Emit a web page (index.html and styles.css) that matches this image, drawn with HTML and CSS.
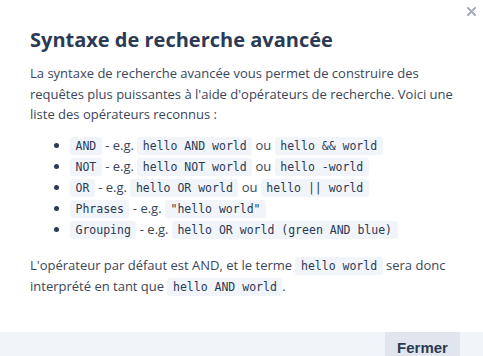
FILE: index.html
```html
<!DOCTYPE html>
<html lang="fr">
<head>
<meta charset="utf-8">
<link rel="stylesheet" href="styles.css">
</head>
<body>
<div class="modal">
  <button class="close" aria-label="Fermer">
    <svg width="9" height="9" viewBox="0 0 9 9"><path d="M1 1L8 8M8 1L1 8" stroke="#a3abb9" stroke-width="2" stroke-linecap="round"/></svg>
  </button>
  <div class="body">
    <h2 class="title">Syntaxe de recherche avancée</h2>
    <p class="text">La syntaxe de recherche avancée vous permet de construire des requêtes plus puissantes à l'aide d'opérateurs de recherche. Voici une liste des opérateurs reconnus :</p>
    <ul class="list">
      <li><code>AND</code> - e.g. <code>hello AND world</code> ou <code>hello &amp;&amp; world</code></li>
      <li><code>NOT</code> - e.g. <code>hello NOT world</code> ou <code>hello -world</code></li>
      <li><code>OR</code> - e.g. <code>hello OR world</code> ou <code>hello || world</code></li>
      <li><code>Phrases</code> - e.g. <code>"hello world"</code></li>
      <li><code>Grouping</code> - e.g. <code>hello OR world (green AND blue)</code></li>
    </ul>
    <p class="text">L'opérateur par défaut est AND, et le terme <code>hello world</code> sera donc interprété en tant que <code>hello AND world</code>.</p>
  </div>
  <div class="footer">
    <button class="btn">Fermer</button>
  </div>
</div>
</body>
</html>
```
FILE: styles.css
```css
html, body {
  margin: 0;
  padding: 0;
  background: #fff;
}
.modal {
  position: relative;
  width: 483px;
  height: 356px;
  overflow: hidden;
  font-family: "Open Sans", sans-serif;
  color: #3b4658;
}
.close {
  position: absolute;
  top: 7px;
  right: 7px;
  border: 0;
  background: none;
  padding: 0;
  width: 9px;
  height: 9px;
  display: flex;
}
.body {
  padding: 25px 30px 0 30px;
}
.title {
  margin: 0 0 8px 0;
  font-size: 20px;
  font-weight: 700;
  color: #2b3a55;
  line-height: 30px;
}
.text {
  margin: 0;
  font-size: 13px;
  line-height: 20.7px;
}
.list {
  margin: 10px 0 15px 0;
  padding-left: 40px;
  font-size: 13px;
  line-height: 21px;
}
.list li::marker {
  color: #2b3a55;
}
code {
  font-family: "DejaVu Sans Mono", monospace;
  font-size: 11.5px;
  line-height: 1;
  background: #f1f4f9;
  border-radius: 3px;
  padding: 2px 5.5px;
  color: #2b3a55;
}
.footer {
  margin-top: 35px;
  background: #f1f4f9;
  height: 40px;
  display: flex;
  justify-content: flex-end;
  padding-right: 23px;
}
.btn {
  border: 0;
  background: #e1e6ee;
  width: 75px;
  height: 40px;
  font-family: "Liberation Sans", Arial, sans-serif;
  font-weight: 700;
  font-size: 15px;
  color: #2d3a52;
  padding: 0 0 9px 0;
}
```
